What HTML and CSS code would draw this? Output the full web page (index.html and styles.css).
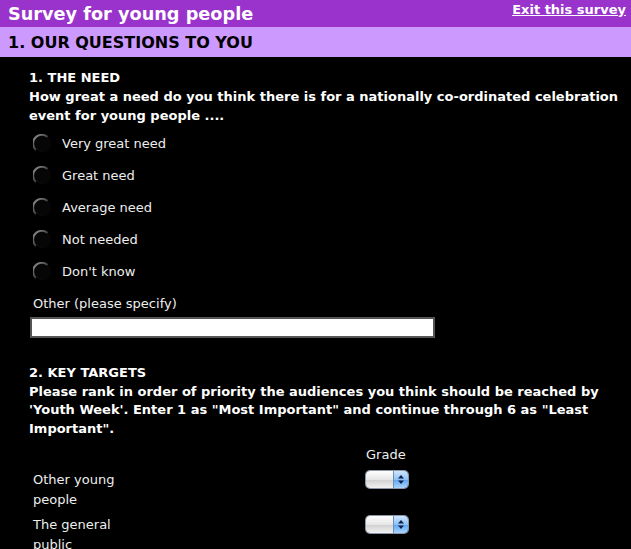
FILE: index.html
```html
<!DOCTYPE html>
<html lang="en">
<head>
<meta charset="utf-8">
<title>Survey for young people</title>
<link rel="stylesheet" href="styles.css">
</head>
<body>
<div class="topbar">
  <span class="survey-title">Survey for young people</span>
  <a class="exit" href="#">Exit this survey</a>
</div>
<div class="section-bar">1. OUR QUESTIONS TO YOU</div>

<div class="question q1">
  <div class="q-text">1. THE NEED<br>How great a need do you think there is for a nationally co-ordinated celebration event for young people ....</div>
  <div class="options">
    <label class="option"><span class="radio"><svg width="19" height="19" viewBox="0 0 19 19"><defs><linearGradient id="g1" x1="0" y1="0" x2="1" y2="1"><stop offset="0" stop-color="#9a9a9a"/><stop offset="0.6" stop-color="#3a3a3a"/><stop offset="1" stop-color="#111"/></linearGradient></defs><circle cx="9.5" cy="9.5" r="9" fill="#060606"/><path d="M3 16 A8 8 0 0 1 14.5 3" fill="none" stroke="url(#g1)" stroke-width="2"/></svg></span>Very great need</label>
    <label class="option"><span class="radio"><svg width="19" height="19" viewBox="0 0 19 19"><circle cx="9.5" cy="9.5" r="9" fill="#060606"/><path d="M3 16 A8 8 0 0 1 14.5 3" fill="none" stroke="url(#g1)" stroke-width="2"/></svg></span>Great need</label>
    <label class="option"><span class="radio"><svg width="19" height="19" viewBox="0 0 19 19"><circle cx="9.5" cy="9.5" r="9" fill="#060606"/><path d="M3 16 A8 8 0 0 1 14.5 3" fill="none" stroke="url(#g1)" stroke-width="2"/></svg></span>Average need</label>
    <label class="option"><span class="radio"><svg width="19" height="19" viewBox="0 0 19 19"><circle cx="9.5" cy="9.5" r="9" fill="#060606"/><path d="M3 16 A8 8 0 0 1 14.5 3" fill="none" stroke="url(#g1)" stroke-width="2"/></svg></span>Not needed</label>
    <label class="option"><span class="radio"><svg width="19" height="19" viewBox="0 0 19 19"><circle cx="9.5" cy="9.5" r="9" fill="#060606"/><path d="M3 16 A8 8 0 0 1 14.5 3" fill="none" stroke="url(#g1)" stroke-width="2"/></svg></span>Don't know</label>
  </div>
  <div class="other-label">Other (please specify)</div>
  <div class="other-input"></div>
</div>

<div class="question q2">
  <div class="q-text">2. KEY TARGETS<br>Please rank in order of priority the audiences you think should be reached by 'Youth Week'. Enter 1 as "Most Important" and continue through 6 as "Least Important".</div>
  <div class="rank-grid">
    <div></div>
    <div class="grade-head">Grade</div>
    <div class="rank-label">Other young people</div>
    <div class="select"><span class="sel-body"></span><span class="sel-btn"><svg width="8" height="11" viewBox="0 0 8 11"><path d="M4 1 L7 4.5 L1 4.5 Z M1 6.5 L7 6.5 L4 10 Z" fill="#10204a"/></svg></span></div>
    <div class="rank-label">The general public</div>
    <div class="select"><span class="sel-body"></span><span class="sel-btn"><svg width="8" height="11" viewBox="0 0 8 11"><path d="M4 1 L7 4.5 L1 4.5 Z M1 6.5 L7 6.5 L4 10 Z" fill="#10204a"/></svg></span></div>
  </div>
</div>
</body>
</html>
```

FILE: styles.css
```css
html, body {
  margin: 0;
  padding: 0;
  background: #000;
  color: #fff;
  font-family: "DejaVu Sans", Verdana, sans-serif;
}

.topbar {
  height: 27px;
  background: #9933cc;
  display: flex;
  justify-content: space-between;
  align-items: flex-start;
  padding: 0 5px 0 8px;
}

.survey-title {
  font-size: 17.7px;
  font-weight: bold;
  line-height: 28px;
  color: #fff;
}

.exit {
  color: #fff;
  font-size: 13px;
  font-weight: bold;
  line-height: 20px;
  text-decoration: underline;
}

.section-bar {
  height: 30px;
  line-height: 31px;
  background: #cc99ff;
  color: #000;
  font-size: 16px;
  font-weight: bold;
  padding-left: 8px;
  border-bottom: 1px solid #000;
}

.question {
  padding-left: 29px;
  padding-right: 10px;
}

.q1 { padding-top: 10px; }
.q2 { padding-top: 26px; }

.q-text {
  font-size: 13px;
  font-weight: bold;
  line-height: 19px;
}

.q2 .q-text {
  line-height: 18.7px;
}

.options {
  margin-top: 2px;
  display: flex;
  flex-direction: column;
}

.option {
  height: 32px;
  display: flex;
  align-items: center;
  font-size: 13px;
  color: #eee;
}

.radio {
  width: 19px;
  height: 19px;
  margin-left: 4px;
  margin-right: 10px;
  display: inline-flex;
}

.other-label {
  margin-top: 7px;
  margin-left: 4px;
  font-size: 13px;
  line-height: 19px;
  color: #eee;
}

.other-input {
  margin-top: 4px;
  margin-left: 1px;
  width: 401px;
  height: 17px;
  background: #fff;
  border: 2px solid #555;
}

.rank-grid {
  margin-top: 6px;
  margin-left: 4px;
  display: grid;
  grid-template-columns: 333px auto;
  row-gap: 5px;
  font-size: 13px;
  color: #eee;
}

.grade-head {
  line-height: 20px;
}

.rank-label {
  width: 100px;
  line-height: 20px;
}

.select {
  margin-top: 1px;
  width: 42px;
  height: 17px;
  display: flex;
  border-radius: 4px;
  overflow: hidden;
  box-shadow: 0 0 0 1px #8a96a8;
}

.sel-body {
  flex: 1;
  background: linear-gradient(#ffffff, #e6e6e6 50%, #cfcfcf 51%, #f2f2f2);
}

.sel-btn {
  width: 14px;
  display: flex;
  align-items: center;
  justify-content: center;
  background: linear-gradient(#cfe6ff, #8ec2f6 50%, #5ea6ef 51%, #a9d4ff);
  border-left: 1px solid #6f8fb8;
}
```
